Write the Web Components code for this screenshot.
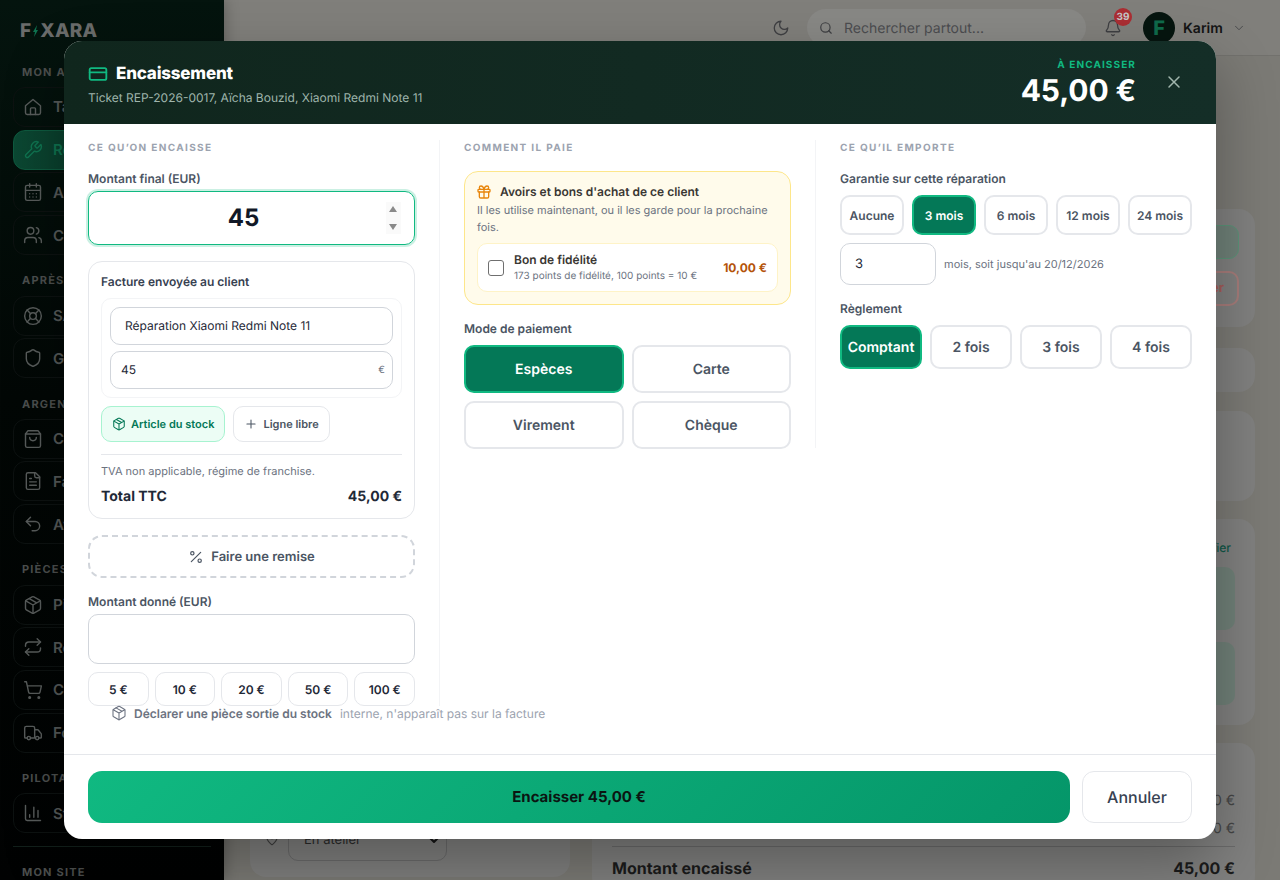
<!DOCTYPE html>
<html>
<head>
<meta charset="utf-8">
<style>
  html, body { margin: 0; height: 100%; }
  body { width: 1280px; height: 880px; overflow: hidden; font-family: Inter, "Noto Sans", sans-serif; text-rendering: geometricPrecision; }
</style>
</head>
<body>
<app-shell></app-shell>

<script>
// little svg helper, all icons are 24 box stroked
function ico(body, size, color, sw) {
  return '<svg width="' + size + '" height="' + size + '" viewBox="0 0 24 24" fill="none" stroke="' + color + '" stroke-width="' + (sw || 2) + '" stroke-linecap="round" stroke-linejoin="round" style="flex:none">' + body + '</svg>';
}
var I = {
  home: '<path d="M3 10.5 12 3l9 7.5V19a2 2 0 0 1-2 2H5a2 2 0 0 1-2-2z"/><path d="M9 21v-7a1 1 0 0 1 1-1h4a1 1 0 0 1 1 1v7"/>',
  wrench: '<path d="M14.7 6.3a1 1 0 0 0 0 1.4l1.6 1.6a1 1 0 0 0 1.4 0l3.77-3.77a6 6 0 0 1-7.94 7.94l-6.91 6.91a2.12 2.12 0 0 1-3-3l6.91-6.91a6 6 0 0 1 7.94-7.94l-3.76 3.76z"/>',
  cal: '<path d="M8 2v4M16 2v4"/><rect x="3" y="4" width="18" height="18" rx="2"/><path d="M3 10h18M8 14h.01M12 14h.01M16 14h.01M8 18h.01M12 18h.01M16 18h.01"/>',
  users: '<path d="M16 21v-2a4 4 0 0 0-4-4H6a4 4 0 0 0-4 4v2"/><circle cx="9" cy="7" r="4"/><path d="M22 21v-2a4 4 0 0 0-3-3.87M16 3.13a4 4 0 0 1 0 7.75"/>',
  life: '<circle cx="12" cy="12" r="10"/><circle cx="12" cy="12" r="4"/><path d="m4.93 4.93 4.24 4.24M14.83 9.17l4.24-4.24M14.83 14.83l4.24 4.24M9.17 14.83l-4.24 4.24"/>',
  shield: '<path d="M20 13c0 5-3.5 7.5-7.66 8.95a1 1 0 0 1-.67-.01C7.5 20.5 4 18 4 13V6a1 1 0 0 1 1-1c2 0 4.5-1.2 6.24-2.72a1.17 1.17 0 0 1 1.52 0C14.51 3.81 17 5 19 5a1 1 0 0 1 1 1z"/>',
  bag: '<path d="M6 2 3 6v14a2 2 0 0 0 2 2h14a2 2 0 0 0 2-2V6l-3-4z"/><path d="M3 6h18M16 10a4 4 0 0 1-8 0"/>',
  file: '<path d="M15 2H6a2 2 0 0 0-2 2v16a2 2 0 0 0 2 2h12a2 2 0 0 0 2-2V7z"/><path d="M14 2v4a2 2 0 0 0 2 2h4M10 9H8M16 13H8M16 17H8"/>',
  undo: '<path d="M9 14 4 9l5-5"/><path d="M4 9h10.5a5.5 5.5 0 0 1 0 11H11"/>',
  box: '<path d="M11 21.73a2 2 0 0 0 2 0l7-4A2 2 0 0 0 21 16V8a2 2 0 0 0-1-1.73l-7-4a2 2 0 0 0-2 0l-7 4A2 2 0 0 0 3 8v8a2 2 0 0 0 1 1.73z"/><path d="M12 22V12M3.3 7 12 12l8.7-5M7.5 4.27l9 5.15"/>',
  repeat: '<path d="m17 2 4 4-4 4"/><path d="M3 11v-1a4 4 0 0 1 4-4h14M7 22l-4-4 4-4"/><path d="M21 13v1a4 4 0 0 1-4 4H3"/>',
  cart: '<circle cx="8" cy="21" r="1"/><circle cx="19" cy="21" r="1"/><path d="M2.05 2.05h2l2.66 12.42a2 2 0 0 0 2 1.58h9.78a2 2 0 0 0 1.95-1.57l1.65-7.43H5.12"/>',
  truck: '<path d="M14 18V6a2 2 0 0 0-2-2H4a2 2 0 0 0-2 2v11a1 1 0 0 0 1 1h2M15 18H9M19 18h2a1 1 0 0 0 1-1v-3.65a1 1 0 0 0-.22-.62l-3.48-4.35A1 1 0 0 0 17.52 8H14"/><circle cx="17" cy="18" r="2"/><circle cx="7" cy="18" r="2"/>',
  chart: '<path d="M3 3v16a2 2 0 0 0 2 2h16M18 17V9M13 17V5M8 17v-3"/>',
  moon: '<path d="M12 3a6 6 0 0 0 9 9 9 9 0 1 1-9-9z"/>',
  search: '<circle cx="11" cy="11" r="8"/><path d="m21 21-4.3-4.3"/>',
  bell: '<path d="M10.27 21a2 2 0 0 0 3.46 0M3.26 15.33A1 1 0 0 0 4 17h16a1 1 0 0 0 .74-1.67C19.41 13.96 18 12.5 18 8A6 6 0 0 0 6 8c0 4.5-1.41 5.96-2.74 7.33"/>',
  chev: '<path d="m6 9 6 6 6-6"/>',
  card: '<rect x="2" y="5" width="20" height="14" rx="2"/><path d="M2 10h20"/>',
  x: '<path d="M18 6 6 18M6 6l12 12"/>',
  gift: '<rect x="3" y="8" width="18" height="4" rx="1"/><path d="M12 8v13M19 12v7a2 2 0 0 1-2 2H7a2 2 0 0 1-2-2v-7M7.5 8a2.5 2.5 0 0 1 0-5A4.8 8 0 0 1 12 8a4.8 8 0 0 1 4.5-5 2.5 2.5 0 0 1 0 5"/>',
  plus: '<path d="M5 12h14M12 5v14"/>',
  percent: '<path d="M19 5 5 19"/><circle cx="6.5" cy="6.5" r="2.5"/><circle cx="17.5" cy="17.5" r="2.5"/>',
  pin: '<path d="M20 10c0 5-5.5 10.2-7.4 11.8a1 1 0 0 1-1.2 0C9.5 20.2 4 15 4 10a8 8 0 0 1 16 0"/><circle cx="12" cy="10" r="3"/>'
};

class FxSidebar extends HTMLElement {
  connectedCallback() {
    var c = '#585c5b';
    var groups = [
      ['MON ATELIER', [['home','Tableau'],['wrench','Réparations',1],['cal','Agenda'],['users','Clients']]],
      ['APRÈS-VENTE', [['life','SAV'],['shield','Garanties']]],
      ['ARGENT', [['bag','Caisse'],['file','Factures'],['undo','Avoirs']]],
      ['PIÈCES', [['box','Pièces'],['repeat','Retours'],['cart','Commandes'],['truck','Fournisseurs']]],
      ['PILOTAGE', [['chart','Statistiques']]]
    ];
    var html = '';
    groups.forEach(function (g) {
      html += '<div class="lab">' + g[0] + '</div>';
      g[1].forEach(function (it) {
        html += '<div class="item' + (it[2] ? ' on' : '') + '">' + ico(I[it[0]], 20, it[2] ? '#0f7350' : c, 1.7) + '<span>' + it[1] + '</span></div>';
      });
    });
    this.attachShadow({ mode: 'open' }).innerHTML = `
      <style>
        :host { display: block; position: relative; z-index: 1; width: 224px; height: 880px; box-sizing: border-box; flex: none; padding: 0 13px; overflow: hidden;
          background: linear-gradient(180deg, #04140e 0%, #020705 45%, #010202 100%); color: #555958; box-shadow: 0 0 14px rgba(0,0,0,.3); }
        .logo { box-sizing: border-box; font: 800 19px/24px Inter, sans-serif; letter-spacing: .2px; color: #6a6c6b; padding: 16px 7px 0; height: 46.5px; display: flex; align-items: center; }
        .logo svg { margin: 0 1px 0 1px; }
        .lab { font: 700 11px/14px Inter, sans-serif; letter-spacing: 1.2px; color: #4c4f4e; padding: 0 9px; margin: 18.3px 0 8.2px; white-space: nowrap; }
        .item { height: 40px; box-sizing: border-box; margin-bottom: 2.7px; display: flex; align-items: center; gap: 10px; padding-left: 9px; border: 1px solid #0d1211; border-radius: 12px; font: 600 15px Inter, sans-serif; white-space: nowrap; }
        .item.on { background: linear-gradient(90deg, #0b4732, #06291d); border-color: #0e5a3f; color: #0f7350; }
        hr { border: 0; border-top: 1px solid #12201b; margin: 13px 0 0; }
      </style>
      <div class="logo">F<svg width="7" height="14" viewBox="0 0 7 14"><path d="M5 1 1 8h2l-1 5 4-7H4z" fill="#0f7350"/></svg>XARA</div>
      ${html}
      <hr>
      <div class="lab" style="margin-top:18px">MON SITE</div>`;
  }
}
customElements.define('fx-sidebar', FxSidebar);

class FxBackdrop extends HTMLElement {
  connectedCallback() {
    this.attachShadow({ mode: 'open' }).innerHTML = `
      <style>
        :host { display: flex; flex-direction: column; flex: 1; min-width: 0; height: 880px; background: #7b7a75; color: #1a1a1a; overflow: hidden; }
        .top { height: 56px; flex: none; box-sizing: border-box; border-bottom: 1px solid #72716d; display: flex; align-items: center; padding: 0 31px 0 548px; background: #807f7b; }
        .search { width: 279px; height: 37px; box-sizing: border-box; margin-left: 17px; padding-left: 12px; border-radius: 19px; background: #888885; display: flex; align-items: center; gap: 11px; font: 14px Inter, sans-serif; color: #4c4d50; flex: none; }
        .search span { padding-top: 2px; }
        .bell { position: relative; margin-left: 18px; display: flex; }
        .badge { position: absolute; top: -11px; left: 10px; width: 18px; height: 18px; border-radius: 50%; background: #ab2e33; color: #c6c6c6; font: 700 10px/18px Inter, sans-serif; text-align: center; }
        .ava { width: 32px; height: 32px; border-radius: 50%; background: #06150f; margin-left: 21px; color: #0f6b4b; font: 800 20px/32px Inter, sans-serif; text-align: center; flex: none; }
        .name { margin: 0 9px 0 8px; padding-top: 2px; font: 600 14px Inter, sans-serif; color: #141414; }
        .main { flex: 1; display: grid; grid-template-columns: 320px 663px; gap: 22px; padding: 0 0 0 26px; min-height: 0; }
        .col { display: flex; flex-direction: column; min-width: 0; }
        .card { flex: none; box-sizing: border-box; background: #80807f; border-radius: 16px; }
        .btn { box-sizing: border-box; border-radius: 10px; margin-left: auto; }
        .sel { box-sizing: border-box; width: 159px; height: 42px; border: 1px solid #6c6c6c; border-radius: 10px; display: flex; align-items: center; justify-content: space-between; padding: 0 4px 0 15px; font: 13px Inter, sans-serif; color: #2b2b2b; }
        .row { display: flex; justify-content: flex-end; height: 28px; align-items: center; font: 14px Inter, sans-serif; color: #454545; }
        .sum { display: flex; justify-content: space-between; font: 700 16px/22px Inter, sans-serif; color: #1b1b1b; margin-top: 10px; }
      </style>
      <div class="top">
        ${ico(I.moon, 18, '#3e3f42', 1.7)}
        <div class="search">${ico(I.search, 14, '#3e3f42', 2)}<span>Rechercher partout...</span></div>
        <div class="bell">${ico(I.bell, 18, '#3e3f42', 1.7)}<div class="badge">39</div></div>
        <div class="ava">F</div>
        <div class="name">Karim</div>
        ${ico(I.chev, 14, '#4a4b4d', 1.7)}
      </div>
      <div class="main">
        <div class="col">
          <div class="card" style="margin-top:620px;height:201px;padding:143px 0 0 14px;display:flex;gap:8px;align-items:flex-start">
            <span style="margin-top:11px;display:flex">${ico(I.pin, 16, '#3d3d3d', 1.6)}</span>
            <div class="sel"><span>En atelier</span>${ico(I.chev, 16, '#161616', 3)}</div>
          </div>
        </div>
        <div class="col">
          <div class="card" style="margin-top:153px;height:118px;padding:16px 16px 0 0">
            <div class="btn" style="width:400px;height:34px;background:#6f8178;border:1px solid #5b9378"></div>
            <div class="btn" style="width:400px;height:35px;margin-top:12px;border:2px solid #a67c7a;color:#a25c58;font:700 13px/31px Inter,sans-serif;text-align:right;padding-right:13px">Annuler</div>
          </div>
          <div class="card" style="margin-top:21px;height:44px"></div>
          <div class="card" style="margin-top:19px;height:90px"></div>
          <div class="card" style="margin-top:18px;height:206px;padding:21px 20px 0">
            <div style="font:500 12px/16px Inter,sans-serif;color:#0f5747;text-align:right;padding-right:4px">Modifier</div>
            <div class="btn" style="height:63px;margin-top:11px;background:#708078"></div>
            <div class="btn" style="height:63px;margin-top:12px;background:#708078"></div>
          </div>
          <div class="card" style="margin-top:18px;height:150px;padding:43px 20px 0">
            <div class="row">45,00 €</div>
            <div class="row">45,00 €</div>
            <div style="border-top:1px solid #6b6b6b;margin-top:4px"></div>
            <div class="sum"><span>Montant encaissé</span><span>45,00 €</span></div>
          </div>
        </div>
      </div>`;
  }
}
customElements.define('fx-backdrop', FxBackdrop);

// buttons of a choice group, big or small
class FxChoice extends HTMLElement {
  connectedCallback() {
    var on = this.hasAttribute('on');
    var h = this.getAttribute('h') || '48';
    var fs = this.getAttribute('fs') || '14';
    this.attachShadow({ mode: 'open' }).innerHTML = `
      <style>
        :host { display: block; min-width: 0; }
        div { box-sizing: border-box; height: ${h}px; display: flex; align-items: center; justify-content: center; border-radius: 10px; border: 2px solid ${on ? '#10b981' : '#e5e7eb'}; background: ${on ? '#047857' : '#fff'}; color: ${on ? '#fff' : '#4b5563'}; font: 600 ${fs}px Inter, sans-serif; white-space: nowrap; }
      </style><div><slot></slot></div>`;
  }
}
customElements.define('fx-choice', FxChoice);

class FxHead extends HTMLElement {
  connectedCallback() {
    this.attachShadow({ mode: 'open' }).innerHTML = `
      <style>
        :host { display: flex; flex: none; box-sizing: border-box; height: 83px; padding: 4px 24px 0; align-items: center; justify-content: space-between; background: linear-gradient(90deg, #10261d, #142e27); color: #fff; }
        .t { display: flex; align-items: center; gap: 8px; font: 800 17px/22px Inter, sans-serif; letter-spacing: -.2px; }
        .s { font: 12px/16px Inter, sans-serif; color: #9fb5ac; margin-top: 5px; }
        .r { display: flex; align-items: center; gap: 28px; margin-top: -2px; }
        .k { font: 700 10px/13px Inter, sans-serif; letter-spacing: 1.1px; color: #10b981; text-align: right; }
        .a { font: 700 30px/36px Inter, sans-serif; letter-spacing: -.1px; text-align: right; margin-top: 1px; }
        .x { display: flex; margin: -4px 8px 0 0; }
      </style>
      <div>
        <div class="t">${ico(I.card, 20, '#10b981', 2.2)}<span>Encaissement</span></div>
        <div class="s">Ticket REP-2026-0017, Aïcha Bouzid, Xiaomi Redmi Note 11</div>
      </div>
      <div class="r">
        <div><div class="k">À ENCAISSER</div><div class="a">45,00 €</div></div>
        <div class="x">${ico(I.x, 20, '#a1b6ad', 1.8)}</div>
      </div>`;
  }
}
customElements.define('fx-head', FxHead);

class FxSection extends HTMLElement {
  connectedCallback() {
    this.attachShadow({ mode: 'open' }).innerHTML = `
      <style>
        :host { display: block; padding-top: 1px; font: 700 10px/14px Inter, sans-serif; letter-spacing: 1.35px; color: #9ca3af; margin-bottom: 16px; }
      </style><slot></slot>`;
  }
}
customElements.define('fx-section', FxSection);

class FxLabel extends HTMLElement {
  connectedCallback() {
    this.attachShadow({ mode: 'open' }).innerHTML = `
      <style>
        :host { display: block; font: 600 12px/16px Inter, sans-serif; color: #4b5563; margin-bottom: 8px; }
      </style><slot></slot>`;
  }
}
customElements.define('fx-label', FxLabel);

class FxInvoice extends HTMLElement {
  connectedCallback() {
    this.attachShadow({ mode: 'open' }).innerHTML = `
      <style>
        :host { display: block; box-sizing: border-box; height: 258px; margin-top: 16px; padding: 12px; border: 1px solid #e5e7eb; border-radius: 14px; }
        .h { font: 600 12px/16px Inter, sans-serif; color: #374151; }
        .line { margin-top: 8px; padding: 8px; border: 1px solid #f3f4f6; border-radius: 10px; height: 100px; box-sizing: border-box; }
        .f { box-sizing: border-box; height: 38px; border: 1px solid #d1d5db; border-radius: 10px; display: flex; align-items: center; justify-content: space-between; font: 12px Inter, sans-serif; color: #1f2937; padding: 0 7px 0 10px; }
        .f + .f { margin-top: 6px; }
        .btns { display: flex; gap: 8px; margin-top: 8px; }
        .b { box-sizing: border-box; height: 36px; display: flex; align-items: center; gap: 5px; padding: 0 10px; border-radius: 10px; border: 1px solid #e5e7eb; font: 600 11px Inter, sans-serif; color: #4b5563; }
        .b.g { background: #ecfdf5; border-color: #a7f3d0; color: #047857; }
        hr { border: 0; border-top: 1px solid #e5e7eb; margin: 12px 0 0; }
        .tva { font: 11px/14px Inter, sans-serif; color: #6b7280; margin-top: 9px; }
        .tot { display: flex; justify-content: space-between; font: 700 14px/18px Inter, sans-serif; color: #1f2937; margin-top: 10px; }
      </style>
      <div class="h">Facture envoyée au client</div>
      <div class="line">
        <div class="f" style="padding-left:14px;padding-bottom:1px"><span>Réparation Xiaomi Redmi Note 11</span></div>
        <div class="f" style="padding-bottom:1px"><span>45</span><span style="color:#6b7280;font-size:10px">€</span></div>
      </div>
      <div class="btns">
        <div class="b g">${ico(I.box, 14, '#047857', 1.8)}<span>Article du stock</span></div>
        <div class="b">${ico(I.plus, 14, '#4b5563', 1.8)}<span>Ligne libre</span></div>
      </div>
      <hr>
      <div class="tva">TVA non applicable, régime de franchise.</div>
      <div class="tot"><span>Total TTC</span><span>45,00 €</span></div>`;
  }
}
customElements.define('fx-invoice', FxInvoice);

class FxVoucher extends HTMLElement {
  connectedCallback() {
    this.attachShadow({ mode: 'open' }).innerHTML = `
      <style>
        :host { display: block; box-sizing: border-box; height: 134px; padding: 11px 12px 0; border: 1px solid #fde68a; border-radius: 14px; background: #fffbeb; }
        .h { display: flex; align-items: center; gap: 8px; margin-left: -1px; font: 600 12px/18px Inter, sans-serif; color: #3a3733; }
        .d { font: 11px/17px Inter, sans-serif; color: #6b7280; margin-top: 1px; }
        .row { box-sizing: border-box; height: 49px; margin-top: 7px; display: flex; align-items: center; padding: 0 10px; background: #fff; border: 1px solid #fef3c7; border-radius: 10px; }
        .cb { width: 16px; height: 16px; box-sizing: border-box; border: 1.25px solid #6f6f6f; border-radius: 3px; background: #fff; flex: none; margin-right: 10px; }
        .n { font: 600 12px/13px Inter, sans-serif; color: #3a3733; }
        .m { font: 10px/13px Inter, sans-serif; color: #6b7280; margin-top: 4px; }
        .v { margin-left: auto; font: 700 12px Inter, sans-serif; color: #b45309; }
      </style>
      <div class="h">${ico(I.gift, 16, '#e8860c', 2)}<span>Avoirs et bons d'achat de ce client</span></div>
      <div class="d">Il les utilise maintenant, ou il les garde pour la prochaine fois.</div>
      <div class="row"><div class="cb"></div><div><div class="n">Bon de fidélité</div><div class="m">173 points de fidélité, 100 points = 10 €</div></div><div class="v">10,00 €</div></div>`;
  }
}
customElements.define('fx-voucher', FxVoucher);

class FxModal extends HTMLElement {
  connectedCallback() {
    this.attachShadow({ mode: 'open' }).innerHTML = `
      <style>
        :host { position: absolute; z-index: 2; left: 64px; top: 41px; width: 1152px; height: 798px; display: flex; flex-direction: column; background: #fff; border-radius: 18px; overflow: hidden; box-shadow: 0 24px 60px rgba(0,0,0,.3); }
        .body { flex: 1; min-height: 0; display: flex; flex-direction: column; }
        .cols { display: grid; grid-template-columns: 376px 376px 400px; align-items: start; height: 566px; margin-top: 16px; }
        .col { box-sizing: border-box; padding: 0 24px; }
        .c1 { height: 566px; border-right: 1px solid #f3f4f6; }
        .c2 { border-right: 1px solid #f3f4f6; height: 308px; }
        .amount { position: relative; box-sizing: border-box; height: 54px; padding: 0 16px 2px 0; border: 1.5px solid #10b981; border-radius: 10px; box-shadow: 0 0 0 2px rgba(16,185,129,.22); display: flex; align-items: center; justify-content: center; font: 700 24px Inter, sans-serif; color: #111827; }
        .spin { position: absolute; right: 13px; top: 10px; box-sizing: border-box; width: 15px; height: 32px; padding: 4px 3px; background: #fafafa; display: flex; flex-direction: column; justify-content: space-between; }
        .spin i { width: 0; height: 0; border-left: 4.5px solid transparent; border-right: 4.5px solid transparent; }
        .remise { box-sizing: border-box; height: 43px; margin-top: 16px; border: 2px dashed #d1d5db; border-radius: 14px; display: flex; align-items: center; justify-content: center; gap: 7px; font: 600 13px Inter, sans-serif; color: #4b5563; }
        .given { box-sizing: border-box; height: 50px; border: 1px solid #d1d5db; border-radius: 10px; }
        .quick { display: grid; grid-template-columns: repeat(5, 1fr); gap: 6px; margin-top: 8px; }
        .quick div { box-sizing: border-box; height: 34px; border: 1px solid #e5e7eb; border-radius: 10px; display: flex; align-items: center; justify-content: center; font: 600 12px Inter, sans-serif; color: #1f2937; }
        .pay { display: grid; grid-template-columns: 1fr 1fr; gap: 8px; }
        .war { display: grid; grid-template-columns: repeat(5, 1fr); gap: 8px; }
        .mo { display: flex; align-items: center; gap: 8px; margin: 8px 0 16px; font: 11px Inter, sans-serif; color: #6b7280; }
        .mo div { box-sizing: border-box; width: 96px; height: 42px; border: 1px solid #d1d5db; border-radius: 10px; padding-left: 14px; display: flex; align-items: center; font: 13px Inter, sans-serif; color: #1f2937; }
        .reg { display: grid; grid-template-columns: repeat(4, 1fr); gap: 8px; }
        .decl { flex: none; display: flex; align-items: center; height: 16px; margin-top: -1px; padding-left: 47px; font: 12px Inter, sans-serif; color: #9ca3af; }
        .decl b { font-weight: 600; color: #6b7280; margin: 0 8px 0 7px; }
        .foot { flex: none; box-sizing: border-box; height: 85px; border-top: 1px solid #e5e7eb; display: flex; gap: 12px; padding: 16px 24px; }
        .go { flex: 1; height: 52px; box-sizing: border-box; padding-bottom: 2px; border-radius: 14px; display: flex; align-items: center; justify-content: center; background: linear-gradient(135deg, #10b981, #059669); font: 700 15px Inter, sans-serif; color: #0b1512; }
        .no { width: 110px; height: 52px; box-sizing: border-box; border: 1px solid #e5e7eb; border-radius: 12px; display: flex; align-items: center; justify-content: center; font: 500 16px Inter, sans-serif; color: #374151; }
      </style>
      <fx-head></fx-head>
      <div class="body">
        <div class="cols">
          <div class="col c1">
            <fx-section>CE QU’ON ENCAISSE</fx-section>
            <fx-label style="margin-bottom:4px">Montant final (EUR)</fx-label>
            <div class="amount">45<div class="spin"><i style="border-bottom:6.5px solid #8a8a8a"></i><i style="border-top:6.5px solid #8a8a8a"></i></div></div>
            <fx-invoice></fx-invoice>
            <div class="remise">${ico(I.percent, 16, '#4b5563', 1.8)}<span>Faire une remise</span></div>
            <fx-label style="margin:16px 0 4px">Montant donné (EUR)</fx-label>
            <div class="given"></div>
            <div class="quick"><div>5 €</div><div>10 €</div><div>20 €</div><div>50 €</div><div>100 €</div></div>
          </div>
          <div class="col c2">
            <fx-section>COMMENT IL PAIE</fx-section>
            <fx-voucher></fx-voucher>
            <fx-label style="margin-top:16px">Mode de paiement</fx-label>
            <div class="pay">
              <fx-choice on>Espèces</fx-choice><fx-choice>Carte</fx-choice>
              <fx-choice>Virement</fx-choice><fx-choice>Chèque</fx-choice>
            </div>
          </div>
          <div class="col">
            <fx-section>CE QU’IL EMPORTE</fx-section>
            <fx-label>Garantie sur cette réparation</fx-label>
            <div class="war">
              <fx-choice h="40" fs="12">Aucune</fx-choice><fx-choice h="40" fs="12" on>3 mois</fx-choice><fx-choice h="40" fs="12">6 mois</fx-choice><fx-choice h="40" fs="12">12 mois</fx-choice><fx-choice h="40" fs="12">24 mois</fx-choice>
            </div>
            <div class="mo"><div>3</div><span>mois, soit jusqu'au 20/12/2026</span></div>
            <fx-label>Règlement</fx-label>
            <div class="reg">
              <fx-choice h="44" on>Comptant</fx-choice><fx-choice h="44">2 fois</fx-choice><fx-choice h="44">3 fois</fx-choice><fx-choice h="44">4 fois</fx-choice>
            </div>
          </div>
        </div>
        <div class="decl">${ico(I.box, 16, '#6b7280', 1.6)}<b>Déclarer une pièce sortie du stock</b><span>interne, n'apparaît pas sur la facture</span></div>
      </div>
      <div class="foot"><div class="go">Encaisser 45,00 €</div><div class="no">Annuler</div></div>`;
  }
}
customElements.define('fx-modal', FxModal);

class AppShell extends HTMLElement {
  connectedCallback() {
    this.attachShadow({ mode: 'open' }).innerHTML = `
      <style>
        :host { display: flex; position: relative; width: 1280px; height: 880px; overflow: hidden; }
      </style>
      <fx-sidebar></fx-sidebar>
      <fx-backdrop></fx-backdrop>
      <fx-modal></fx-modal>`;
  }
}
customElements.define('app-shell', AppShell);
</script>
</body>
</html>
